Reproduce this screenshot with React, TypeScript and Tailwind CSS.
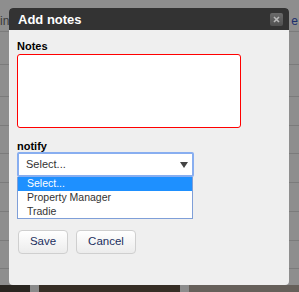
export default function App() {
  const rows = [26, 33, 32, 29, 28, 29, 29, 29, 28];
  return (
    <div className="relative w-[299px] h-[292px] overflow-hidden bg-[#8e8e8e] font-['Liberation_Sans',Arial,sans-serif]">
      {/* page behind the modal */}
      <div className="flex flex-col h-full">
        <div className="h-[6px]" />
        {rows.map((h, i) => (
          <div key={i} className="flex items-end justify-between border-b border-[#7b7b7b] px-0" style={{ height: h }}>
            {i === 0 && (
              <>
                <span className="text-[12px] leading-[14px] text-[#3a3a3a] mb-[3px]">ing</span>
                <span className="text-[12px] leading-[14px] text-[#1c2f6e] mr-[1px] mb-[3px]">e</span>
              </>
            )}
          </div>
        ))}
        <div className="flex-1" />
        <div className="flex h-[7px]">
          <div className="w-[30px] bg-[#2a2621]" />
          <div className="w-[9px] bg-[#8a8a8a]" />
          <div className="w-[141px] bg-[#362e25]" />
          <div className="w-[9px] bg-[#8c8c8c]" />
          <div className="flex-1 bg-[#66605a]" />
        </div>
      </div>

      {/* modal */}
      <div className="absolute left-[9px] top-[8px] w-[280px] h-[277px] bg-[#efefef] rounded-[4px] flex flex-col">
        <div className="h-[22px] bg-[#333333] rounded-t-[4px] flex items-center justify-between pl-[9px] pr-[6px]">
          <span className="text-white font-bold text-[13px] leading-[15px] mt-[1px]">Add notes</span>
          <button className="w-[13px] h-[13px] rounded-[2px] bg-gradient-to-b from-[#6a6a6a] to-[#505050] flex items-center justify-center">
            <svg width="7" height="7" viewBox="0 0 7 7">
              <path d="M1 1L6 6M6 1L1 6" stroke="#b8b8b8" strokeWidth="1.6" />
            </svg>
          </button>
        </div>
        <div className="flex flex-col px-[8px] pt-[10px]">
          <label className="text-[11px] leading-[12px] font-bold text-black">Notes</label>
          <div className="mt-[2px] w-[224px] h-[74px] bg-white border border-[#ff0000] rounded-[3px]" />
          <label className="mt-[12px] text-[11px] leading-[12px] font-bold text-black">notify</label>
          <div className="w-[177px] h-[25px] bg-white border-2 border-[#88aef0] rounded-[2px] flex items-center justify-between pl-[7px] pr-[4px]">
            <span className="text-[11px] text-[#333]">Select...</span>
            <svg width="8" height="6" viewBox="0 0 8 6">
              <path d="M0 0H8L4 6Z" fill="#444" />
            </svg>
          </div>
          <div className="w-[176px] bg-white border border-[#7f9fd8] border-t-0 flex flex-col text-[10.5px] leading-[13.5px]">
            <div className="bg-[#1e90ff] text-white pl-[9px] h-[14px]">Select...</div>
            <div className="text-[#333] pl-[9px] h-[14px]">Property Manager</div>
            <div className="text-[#333] pl-[9px] h-[13px]">Tradie</div>
          </div>
          <div className="flex gap-[8px] mt-[11px] ml-[1px]">
            <button className="w-[50px] h-[24px] rounded-[4px] border border-[#cfcfcf] bg-gradient-to-b from-white to-[#ececec] text-[11.5px] text-[#1c2f5e]">Save</button>
            <button className="w-[60px] h-[24px] rounded-[4px] border border-[#cfcfcf] bg-gradient-to-b from-white to-[#ececec] text-[11.5px] text-[#1c2f5e]">Cancel</button>
          </div>
        </div>
      </div>
    </div>
  );
}
